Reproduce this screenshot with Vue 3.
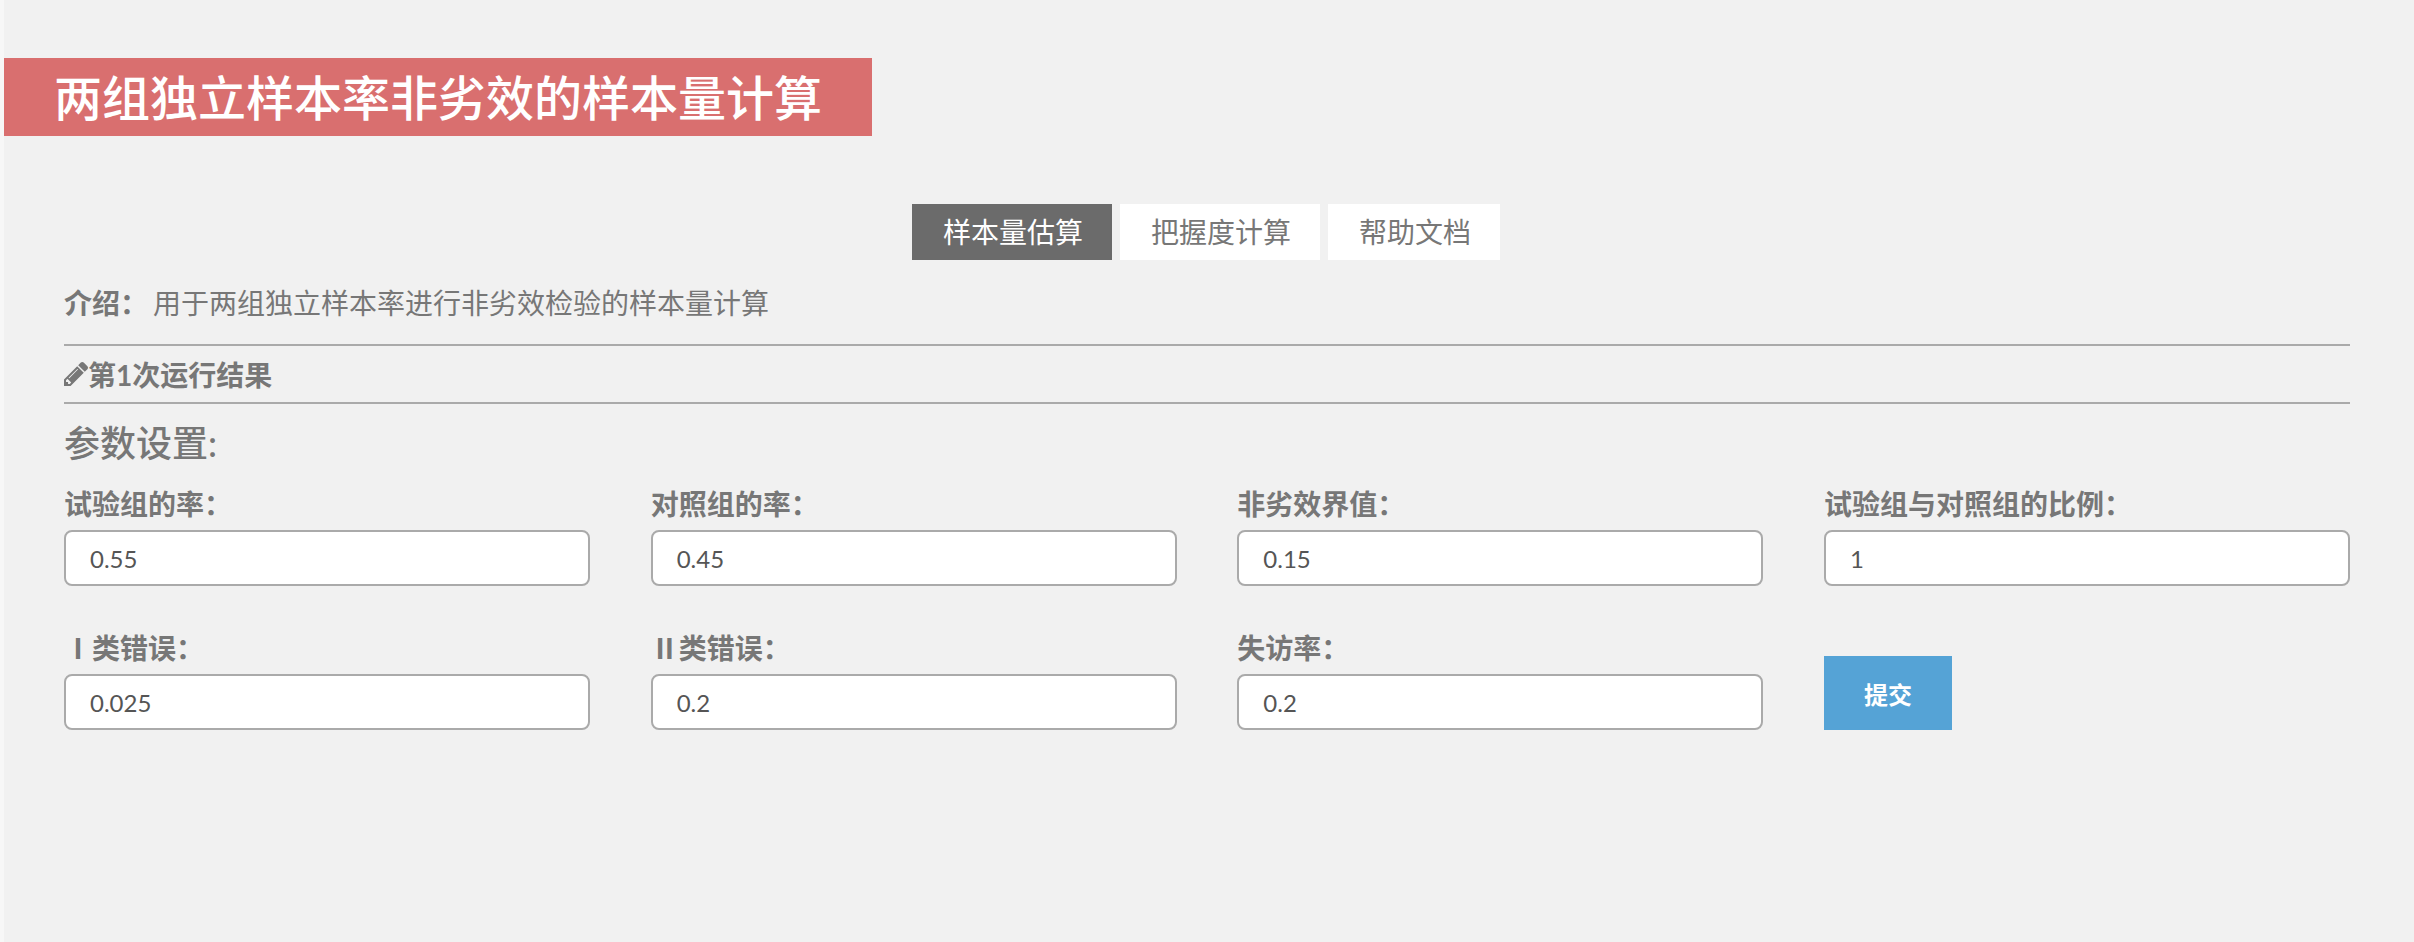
<script setup>
const rows = [
  [
    { label: '试验组的率：', value: '0.55' },
    { label: '对照组的率：', value: '0.45' },
    { label: '非劣效界值：', value: '0.15' },
    { label: '试验组与对照组的比例：', value: '1' }
  ],
  [
    { label: 'Ⅰ类错误：', value: '0.025' },
    { label: 'Ⅱ类错误：', value: '0.2' },
    { label: '失访率：', value: '0.2' }
  ]
]
const tabs = ['样本量估算', '把握度计算', '帮助文档']
</script>

<template>
  <div class="page">
    <h1 class="title">两组独立样本率非劣效的样本量计算</h1>
    <nav class="tabs">
      <a v-for="(t, i) in tabs" :key="t" class="tab" :class="{ active: i === 0 }">{{ t }}</a>
    </nav>
    <div class="content">
      <p class="intro"><b>介绍：</b><span>用于两组独立样本率进行非劣效检验的样本量计算</span></p>
      <div class="result">
        <svg class="pencil" viewBox="0 -107 1515 1515" width="24" height="24" aria-hidden="true">
          <path d="M363 1280l91-91-235-235-91 91v107h128v128h107zm523-928q0-22-22-22-10 0-17 7l-542 542q-7 7-7 17 0 22 22 22 10 0 17-7l542-542q7-7 7-17zm-54-192l416 416-832 832h-416v-416zm683 96q0 53-37 90l-166 166-416-416 166-165q36-38 90-38 53 0 91 38l235 234q37 39 37 91z" />
        </svg>
        <span>第1次运行结果</span>
      </div>
      <h2 class="params">参数设置:</h2>
      <form class="grid" @submit.prevent>
        <template v-for="(row, r) in rows" :key="r">
          <div v-for="f in row" :key="f.label" class="field">
            <label>{{ f.label }}</label>
            <input type="text" :value="f.value" />
          </div>
        </template>
        <div class="action">
          <button type="submit">提交</button>
        </div>
      </form>
    </div>
  </div>
</template>

<style>
html, body { margin: 0; padding: 0; background: #f7f7f7; }
</style>

<style scoped>
.page {
  margin-left: 4px;
  min-height: 942px;
  box-sizing: border-box;
  padding-top: 58px;
  background: #f1f1f1;
  color: #777;
  font-family: Lato, "Noto Sans CJK SC", sans-serif;
}
.title {
  display: block;
  width: 868px;
  height: 78px;
  box-sizing: border-box;
  margin: 0;
  padding: 2px 0 0 50px;
  background: #d96f6f;
  color: #fff;
  font-size: 48px;
  font-weight: 500;
  line-height: 76px;
  white-space: nowrap;
}
.tabs {
  display: flex;
  gap: 8px;
  margin-top: 68px;
  padding-left: 908px;
}
.tab {
  height: 56px;
  padding: 0 29px 0 31px;
  background: #fff;
  color: #777;
  font-size: 28px;
  line-height: 56px;
}
.tab.active { background: #6b6b6b; color: #fff; }
.content { padding: 0 60px; margin-right: 4px; }
.intro {
  display: flex;
  height: 86px;
  box-sizing: border-box;
  margin: 0;
  border-bottom: 2px solid #aaa;
  padding-top: 22px;
  font-size: 28px;
  line-height: 42px;
}
.intro b { width: 89px; font-weight: 700; }
.result {
  display: flex;
  align-items: center;
  height: 58px;
  box-sizing: border-box;
  border-bottom: 2px solid #aaa;
  font-size: 28px;
  font-weight: 700;
}
.pencil { flex: none; fill: #777; }
.params {
  margin: 14px 0 0;
  font-size: 36px;
  font-weight: 500;
  line-height: 50px;
}
.grid {
  display: grid;
  grid-template-columns: repeat(4, 526px);
  justify-content: space-between;
  row-gap: 41px;
  margin-top: 15px;
}
.field { display: flex; flex-direction: column; }
.field label {
  height: 42px;
  margin-bottom: 5px;
  font-size: 28px;
  font-weight: 700;
  line-height: 42px;
  white-space: nowrap;
}
.field input {
  width: 100%;
  height: 56px;
  box-sizing: border-box;
  border: 2px solid #aaa;
  border-radius: 8px;
  padding: 0 24px;
  background: #fff;
  color: #555;
  font-family: inherit;
  font-size: 24px;
}
.action { display: flex; align-items: flex-end; }
.action button {
  width: 128px;
  height: 74px;
  border: 0;
  padding: 0;
  background: #55a3d6;
  color: #fff;
  font-family: inherit;
  font-size: 24px;
  font-weight: 700;
}
</style>
